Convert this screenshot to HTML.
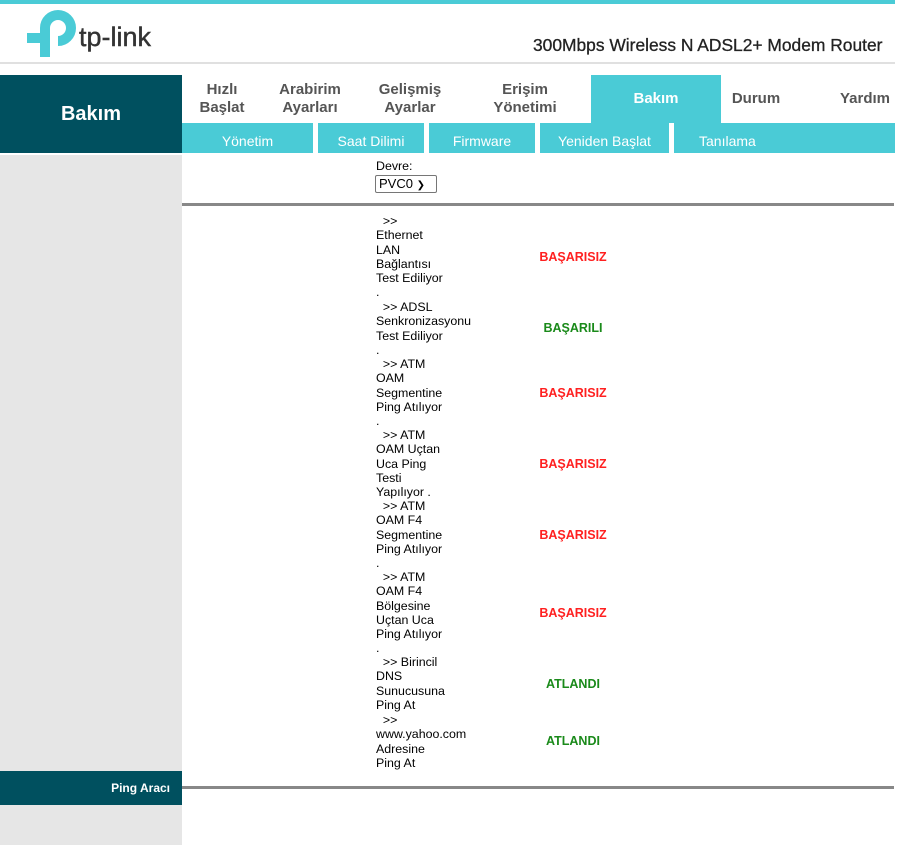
<!DOCTYPE html>
<html><head><meta charset="utf-8"><style>
*{margin:0;padding:0;box-sizing:border-box}
body{width:900px;height:845px;position:relative;background:#fff;font-family:"Liberation Sans",Arial,sans-serif;overflow:hidden}
.a{position:absolute}
.nav{position:absolute;top:75px;height:48px;display:flex;align-items:center;justify-content:center;text-align:center;color:#555;font-weight:bold;font-size:15px;line-height:18px}
.sub{position:absolute;top:123px;height:30px;background:#4acbd6;color:#fff;font-size:14px;display:flex;align-items:center;justify-content:center;padding-top:5px}
.t{position:absolute;left:376px;font-size:12.4px;line-height:14.3px;color:#000;white-space:pre}
.s{position:absolute;left:520px;width:106px;text-align:center;font-size:12.5px;font-weight:bold}
.r{color:#ff2020}.g{color:#1a8a1a}
</style></head><body>
<div class="a" style="left:0;top:0;width:895px;height:4px;background:#4acbd6"></div>
<svg class="a" style="left:0;top:0" width="170" height="64">
<path d="M45 57 V28 A13 13 0 1 1 58 41" fill="none" stroke="#4acbd6" stroke-width="10"/>
<path d="M27 38 H46" stroke="#4acbd6" stroke-width="10"/>
<text x="79" y="46" font-family="Liberation Sans,sans-serif" font-size="27" fill="#333" stroke="#333" stroke-width="0.4">tp-link</text>
</svg>
<div class="a" style="left:533px;top:35px;font-size:17.4px;color:#222;-webkit-text-stroke:0.3px #222">300Mbps Wireless N ADSL2+ Modem Router</div>
<div class="a" style="left:0;top:62px;width:895px;height:2px;background:#e0e0e0"></div>
<div class="a" style="left:0;top:75px;width:182px;height:78px;background:#00505f;color:#fff;font-weight:bold;font-size:20px;display:flex;align-items:center;justify-content:center">Bakım</div>
<div class="nav" style="left:182px;width:80px">Hızlı<br>Başlat</div>
<div class="nav" style="left:265px;width:90px">Arabirim<br>Ayarları</div>
<div class="nav" style="left:365px;width:90px">Gelişmiş<br>Ayarlar</div>
<div class="nav" style="left:470px;width:110px">Erişim<br>Yönetimi</div>
<div class="nav" style="left:591px;width:130px;background:#4acbd6;color:#fff">Bakım</div>
<div class="nav" style="left:721px;width:70px">Durum</div>
<div class="nav" style="left:830px;width:70px">Yardım</div>
<div class="sub" style="left:182px;width:131px">Yönetim</div>
<div class="sub" style="left:318px;width:106px">Saat Dilimi</div>
<div class="sub" style="left:429px;width:106px">Firmware</div>
<div class="sub" style="left:540px;width:129px">Yeniden Başlat</div>
<div class="sub" style="left:674px;width:221px;justify-content:flex-start;padding-left:25px">Tanılama</div>
<div class="a" style="left:0;top:155px;width:182px;height:690px;background:#e6e6e6"></div>
<div class="a" style="left:0;top:771px;width:182px;height:34px;background:#00505f;color:#fff;font-weight:bold;font-size:12px;text-align:right;padding-right:12px;line-height:34px">Ping Aracı</div>
<div class="t" style="top:159px">Devre:</div>
<div class="a" style="left:375px;top:175px;width:62px;height:18px;border:1px solid #767676;border-radius:2px;font-size:13px;line-height:16px;padding-left:3px">PVC0 <span style="font-size:10px">&#10095;</span></div>
<div class="a" style="left:182px;top:203px;width:712px;height:3px;background:#888"></div>
<div class="a" style="left:182px;top:786px;width:712px;height:3px;background:#888"></div>
<div class="t" style="top:214px">  &gt;&gt;
Ethernet
LAN
Bağlantısı
Test Ediliyor
.</div>
<div class="s r" style="top:250px">BAŞARISIZ</div>
<div class="t" style="top:300px">  &gt;&gt; ADSL
Senkronizasyonu
Test Ediliyor
.</div>
<div class="s g" style="top:321px">BAŞARILI</div>
<div class="t" style="top:357px">  &gt;&gt; ATM
OAM
Segmentine
Ping Atılıyor
.</div>
<div class="s r" style="top:386px">BAŞARISIZ</div>
<div class="t" style="top:428px">  &gt;&gt; ATM
OAM Uçtan
Uca Ping
Testi
Yapılıyor .</div>
<div class="s r" style="top:457px">BAŞARISIZ</div>
<div class="t" style="top:499px">  &gt;&gt; ATM
OAM F4
Segmentine
Ping Atılıyor
.</div>
<div class="s r" style="top:528px">BAŞARISIZ</div>
<div class="t" style="top:570px">  &gt;&gt; ATM
OAM F4
Bölgesine
Uçtan Uca
Ping Atılıyor
.</div>
<div class="s r" style="top:606px">BAŞARISIZ</div>
<div class="t" style="top:655px">  &gt;&gt; Birincil
DNS
Sunucusuna
Ping At</div>
<div class="s g" style="top:677px">ATLANDI</div>
<div class="t" style="top:713px">  &gt;&gt;
www.yahoo.com
Adresine
Ping At</div>
<div class="s g" style="top:734px">ATLANDI</div>
</body></html>
